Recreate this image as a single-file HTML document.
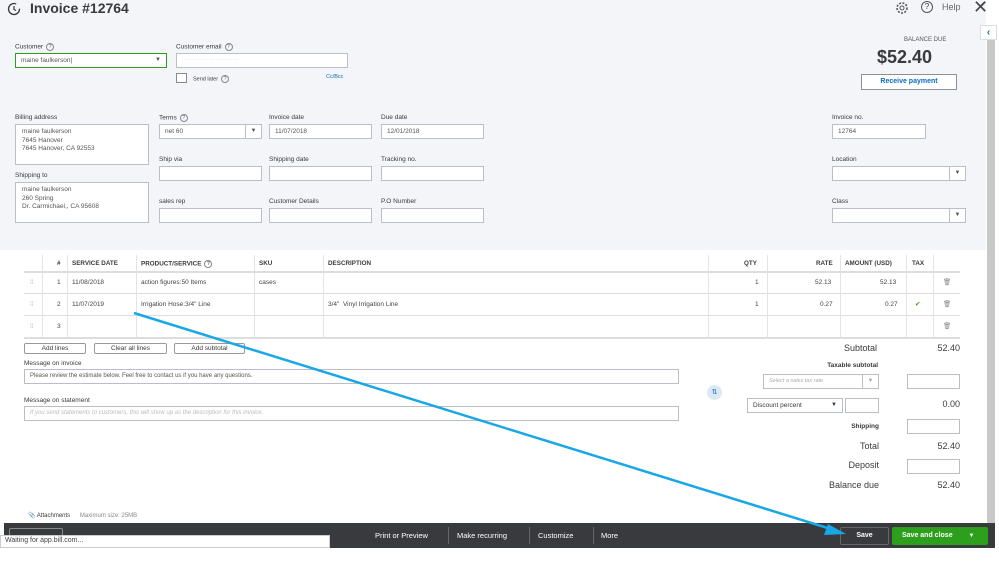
<!DOCTYPE html>
<html><head><meta charset="utf-8"><style>
*{margin:0;padding:0;box-sizing:border-box}
body{width:999px;height:562px;overflow:hidden;background:#fff;font-family:"Liberation Sans",sans-serif;color:#393a3d;position:relative;font-size:7px}
.a{position:absolute}
.hdr{left:0;top:0;width:986px;height:250px;background:#f4f5f8}
.lbl{position:absolute;font-size:6.5px;color:#393a3d}
.in{position:absolute;background:#fff;border:1px solid #babec5;height:15px;font-size:6.5px;padding:3px 5px;color:#555}
.dd{position:absolute;right:0;top:0;width:16px;height:13px;border-left:1px solid #babec5;font-size:6px;text-align:center;line-height:13px}
.q{display:inline-block;width:8px;height:8px;border:1px solid #888;border-radius:50%;font-size:5px;text-align:center;line-height:6px;vertical-align:middle;margin-left:3px;color:#666}
.th{position:absolute;top:260px;font-size:6.3px;font-weight:bold;color:#393a3d}
.cell{position:absolute;font-size:6.5px;color:#444}
.hl{position:absolute;left:24px;width:936px;height:1px;background:#ddd}
.vl{position:absolute;width:1px;background:#e3e3e3;top:255px;height:83px}
.btn{position:absolute;top:343px;height:11px;border:1px solid #999;border-radius:2px;font-size:6.5px;text-align:center;line-height:9px;background:#fff}
.r{position:absolute;font-size:8px;text-align:right;color:#393a3d}
.box{position:absolute;width:53px;height:15px;background:#fff;border:1px solid #babec5}
.bb{position:absolute;color:#fff;font-size:7.5px;top:531px}
</style></head><body>
<div class="a hdr"></div>
<div class="a" style="left:986px;top:0;width:13px;height:523px;background:#fff"></div>
<div class="a" style="left:987px;top:40px;width:8px;height:483px;background:#c8c8c8"></div>
<div class="a" style="left:980px;top:25px;width:17px;height:15px;background:#fff;border:1px solid #ddd;color:#0b6ac2;font-size:10px;font-weight:bold;text-align:center;line-height:13px">&lsaquo;</div>

<svg class="a" style="left:6px;top:1px" width="16" height="16" viewBox="0 0 16 16"><circle cx="8" cy="8" r="5.5" fill="none" stroke="#393a3d" stroke-width="1.3" stroke-dasharray="28 6"/><path d="M8 5v3.5l2 1" stroke="#393a3d" stroke-width="1.2" fill="none"/></svg>
<div class="a" style="left:30px;top:0;font-size:14px;font-weight:bold">Invoice #12764</div>
<svg class="a" style="left:895px;top:1px" width="14" height="14" viewBox="0 0 14 14"><circle cx="7" cy="7" r="2" fill="none" stroke="#555"/><circle cx="7" cy="7" r="5" fill="none" stroke="#555" stroke-dasharray="2 1.4" stroke-width="1.6"/></svg>
<div class="a" style="left:921px;top:1px;width:12px;height:12px;border:1px solid #555;border-radius:50%;font-size:8px;text-align:center;line-height:10px">?</div>
<div class="a" style="left:942px;top:2px;font-size:9px;color:#666">Help</div>
<div class="a" style="left:973px;top:-3px;font-size:18px;color:#444">&#x2715;</div>

<div class="lbl" style="left:15px;top:43px">Customer<span class="q">?</span></div>
<div class="in" style="left:15px;top:53px;width:152px;border-color:#2ca01c">maine faulkerson|<div class="dd" style="border:none">&#9660;</div></div>
<div class="lbl" style="left:176px;top:43px">Customer email<span class="q">?</span></div>
<div class="in" style="left:176px;top:53px;width:172px;color:#bbb;font-size:5px">· · · · · · · · · · · · · · · · · · ·</div>
<div class="a" style="left:176px;top:73px;width:11px;height:10px;background:#fff;border:1px solid #888"></div>
<div class="lbl" style="left:193px;top:75px;font-size:5.5px">Send later<span class="q">?</span></div>
<div class="lbl" style="left:326px;top:74px;font-size:5.5px;color:#0b6ac2">Cc/Bcc</div>

<div class="lbl" style="left:904px;top:37px;font-size:6px;color:#555">BALANCE DUE</div>
<div class="a" style="left:877px;top:47px;font-size:18px;font-weight:bold">$52.40</div>
<div class="a" style="left:861px;top:74px;width:96px;height:16px;border:1.5px solid #8d9096;background:#fff;color:#0b6ac2;font-weight:bold;font-size:7px;text-align:center;line-height:13px">Receive payment</div>

<div class="lbl" style="left:15px;top:114px">Billing address</div>
<div class="in" style="left:15px;top:124px;width:134px;height:41px;line-height:8.5px;padding:3px 6px">maine faulkerson<br>7645 Hanover<br>7645 Hanover, CA 92553</div>
<div class="lbl" style="left:15px;top:172px">Shipping to</div>
<div class="in" style="left:15px;top:182px;width:134px;height:41px;line-height:8.5px;padding:3px 6px">maine faulkerson<br>260 Spring<br>Dr. Carmichael,, CA 95608</div>

<div class="lbl" style="left:159px;top:114px">Terms<span class="q">?</span></div>
<div class="in" style="left:159px;top:124px;width:103px">net 60<div class="dd">&#9660;</div></div>
<div class="lbl" style="left:269px;top:114px">Invoice date</div>
<div class="in" style="left:269px;top:124px;width:103px">11/07/2018</div>
<div class="lbl" style="left:381px;top:114px">Due date</div>
<div class="in" style="left:381px;top:124px;width:103px">12/01/2018</div>
<div class="lbl" style="left:159px;top:156px">Ship via</div>
<div class="in" style="left:159px;top:166px;width:103px"></div>
<div class="lbl" style="left:269px;top:156px">Shipping date</div>
<div class="in" style="left:269px;top:166px;width:103px"></div>
<div class="lbl" style="left:381px;top:156px">Tracking no.</div>
<div class="in" style="left:381px;top:166px;width:103px"></div>
<div class="lbl" style="left:159px;top:198px">sales rep</div>
<div class="in" style="left:159px;top:208px;width:103px"></div>
<div class="lbl" style="left:269px;top:198px">Customer Details</div>
<div class="in" style="left:269px;top:208px;width:103px"></div>
<div class="lbl" style="left:381px;top:198px">P.O Number</div>
<div class="in" style="left:381px;top:208px;width:103px"></div>

<div class="lbl" style="left:832px;top:114px">Invoice no.</div>
<div class="in" style="left:832px;top:124px;width:94px">12764</div>
<div class="lbl" style="left:832px;top:156px">Location</div>
<div class="in" style="left:832px;top:166px;width:134px"><div class="dd">&#9660;</div></div>
<div class="lbl" style="left:832px;top:198px">Class</div>
<div class="in" style="left:832px;top:208px;width:134px"><div class="dd">&#9660;</div></div>

<div class="th" style="left:57px">#</div>
<div class="th" style="left:72px">SERVICE DATE</div>
<div class="th" style="left:141px">PRODUCT/SERVICE<span class="q">?</span></div>
<div class="th" style="left:259px">SKU</div>
<div class="th" style="left:328px">DESCRIPTION</div>
<div class="th" style="left:744px">QTY</div>
<div class="th" style="left:816px">RATE</div>
<div class="th" style="left:845px">AMOUNT (USD)</div>
<div class="th" style="left:912px">TAX</div>
<div class="hl" style="top:271px;height:2px"></div>
<div class="hl" style="top:293px"></div>
<div class="hl" style="top:315px"></div>
<div class="hl" style="top:337px;height:2px"></div>
<div class="vl" style="left:42px"></div><div class="vl" style="left:67px"></div><div class="vl" style="left:136px"></div><div class="vl" style="left:254px"></div><div class="vl" style="left:323px"></div><div class="vl" style="left:708px"></div><div class="vl" style="left:767px"></div><div class="vl" style="left:840px"></div><div class="vl" style="left:906px"></div><div class="vl" style="left:933px"></div>
<div class="cell" style="left:30px;top:279px;color:#aaa">⁞⁞</div><div class="cell" style="left:30px;top:301px;color:#aaa">⁞⁞</div><div class="cell" style="left:30px;top:323px;color:#aaa">⁞⁞</div>
<div class="cell" style="left:57px;top:279px">1</div><div class="cell" style="left:72px;top:279px">11/08/2018</div><div class="cell" style="left:141px;top:279px">action figures:50 Items</div><div class="cell" style="left:259px;top:279px">cases</div><div class="cell" style="left:755px;top:279px">1</div><div class="cell" style="left:815px;top:279px">52.13</div><div class="cell" style="left:880px;top:279px">52.13</div>
<div class="cell" style="left:57px;top:301px">2</div><div class="cell" style="left:72px;top:301px">11/07/2019</div><div class="cell" style="left:141px;top:301px">Irrigation Hose:3/4" Line</div><div class="cell" style="left:328px;top:301px">3/4"&nbsp; Vinyl Irrigation Line</div><div class="cell" style="left:755px;top:301px">1</div><div class="cell" style="left:820px;top:301px">0.27</div><div class="cell" style="left:885px;top:301px">0.27</div><div class="cell" style="left:915px;top:300px;color:#2ca01c">&#10004;</div>
<div class="cell" style="left:57px;top:323px">3</div>
<div class="cell" style="left:943px;top:278px;color:#888">&#128465;</div><div class="cell" style="left:943px;top:300px;color:#888">&#128465;</div><div class="cell" style="left:943px;top:322px;color:#888">&#128465;</div>

<div class="btn" style="left:24px;width:62px">Add lines</div>
<div class="btn" style="left:94px;width:73px">Clear all lines</div>
<div class="btn" style="left:174px;width:71px">Add subtotal</div>
<div class="lbl" style="left:24px;top:360px">Message on invoice</div>
<div class="in" style="left:24px;top:369px;width:655px;height:15px;font-size:6px">Please review the estimate below.  Feel free to contact us if you have any questions.</div>
<div class="lbl" style="left:24px;top:397px">Message on statement</div>
<div class="in" style="left:24px;top:406px;width:655px;height:15px;font-size:6px;color:#bbb;font-style:italic">If you send statements to customers, this will show up as the description for this invoice.</div>

<div class="r" style="left:800px;top:343px;width:77px;font-size:9px">Subtotal</div>
<div class="r" style="left:900px;top:343px;width:60px;font-size:9px">52.40</div>
<div class="r" style="left:780px;top:362px;width:98px;font-size:6.5px;font-weight:bold">Taxable subtotal</div>
<div class="in" style="left:763px;top:374px;width:116px;font-size:5.5px;font-style:italic;color:#aaa">Select a sales tax rate<div class="dd">&#9660;</div></div>
<div class="box" style="left:907px;top:374px"></div>
<div class="a" style="left:707px;top:385px;width:15px;height:15px;border-radius:50%;background:#dde8f5;color:#0b6ac2;font-size:7px;text-align:center;line-height:15px">⇅</div>
<div class="in" style="left:747px;top:398px;width:96px;color:#393a3d">Discount percent<div class="dd" style="border:none">&#9660;</div></div>
<div class="box" style="left:845px;top:398px;width:34px"></div>
<div class="r" style="left:900px;top:399px;width:60px;font-size:9px">0.00</div>
<div class="r" style="left:800px;top:423px;width:79px;font-size:6.5px;font-weight:bold">Shipping</div>
<div class="box" style="left:907px;top:419px"></div>
<div class="r" style="left:800px;top:441px;width:79px;font-size:9px">Total</div>
<div class="r" style="left:900px;top:441px;width:60px;font-size:9px">52.40</div>
<div class="r" style="left:800px;top:460px;width:79px;font-size:9px">Deposit</div>
<div class="box" style="left:907px;top:459px"></div>
<div class="r" style="left:800px;top:480px;width:79px;font-size:9px">Balance due</div>
<div class="r" style="left:900px;top:480px;width:60px;font-size:9px">52.40</div>

<div class="lbl" style="left:28px;top:512px;font-size:6px">&#128206; Attachments <span style="color:#888;margin-left:8px">Maximum size: 25MB</span></div>

<div class="a" style="left:4px;top:523px;width:991px;height:25px;background:#393a3d"></div>
<div class="a" style="left:9px;top:528px;width:54px;height:12px;border:1px solid #888;border-radius:2px"></div>
<div class="a" style="left:0;top:535px;width:330px;height:13px;background:#fff;border:1px solid #ccc;font-size:7px;padding:1px 4px;color:#444">Waiting for app.bill.com...</div>
<div class="bb" style="left:375px">Print or Preview</div>
<div class="a" style="left:448px;top:527px;width:1px;height:17px;background:#666"></div>
<div class="bb" style="left:457px">Make recurring</div>
<div class="a" style="left:529px;top:527px;width:1px;height:17px;background:#666"></div>
<div class="bb" style="left:538px">Customize</div>
<div class="a" style="left:593px;top:527px;width:1px;height:17px;background:#666"></div>
<div class="bb" style="left:601px">More</div>
<div class="a" style="left:840px;top:527px;width:49px;height:18px;border:1px solid #666;border-radius:2px;color:#fff;font-size:7px;font-weight:bold;text-align:center;line-height:16px">Save</div>
<div class="a" style="left:892px;top:527px;width:96px;height:18px;background:#2ca01c;border-radius:2px;color:#fff;font-size:7px;font-weight:bold;padding-left:10px;line-height:18px">Save and close <span style="margin-left:14px;font-size:6px">&#9660;</span></div>

<svg class="a" style="left:0;top:0" width="999" height="562"><line x1="134" y1="313" x2="834" y2="530" stroke="#1aa7e6" stroke-width="2.5"/><polygon points="846,534 828,524 824,535" fill="#1aa7e6"/></svg>
</body></html>
